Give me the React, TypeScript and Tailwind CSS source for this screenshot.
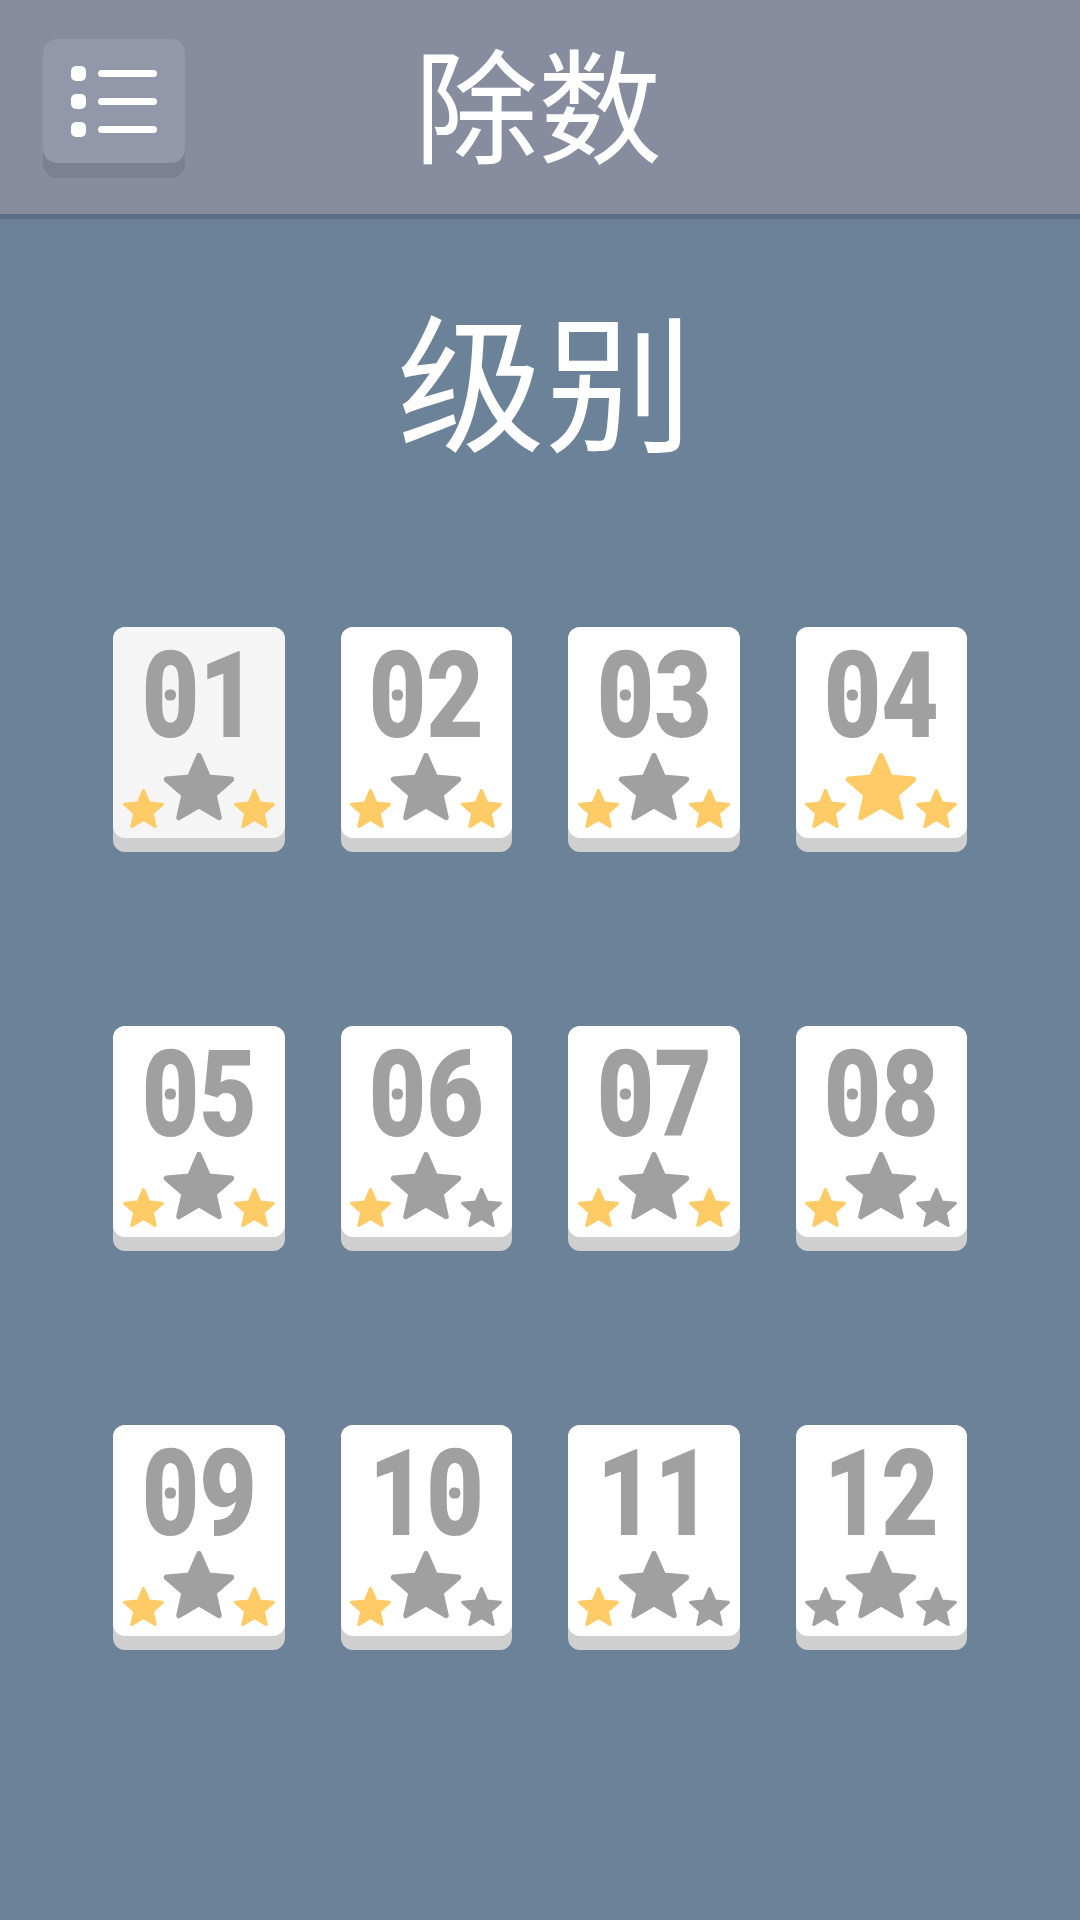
import React from "react";

type Level = {
  label: string;
  stars: [boolean, boolean, boolean];
};

const levels: Level[] = [
  { label: "01", stars: [true, false, true] },
  { label: "02", stars: [true, false, true] },
  { label: "03", stars: [true, false, true] },
  { label: "04", stars: [true, true, true] },
  { label: "05", stars: [true, false, true] },
  { label: "06", stars: [true, false, false] },
  { label: "07", stars: [true, false, true] },
  { label: "08", stars: [true, false, false] },
  { label: "09", stars: [true, false, true] },
  { label: "10", stars: [true, false, false] },
  { label: "11", stars: [true, false, false] },
  { label: "12", stars: [false, false, false] },
];

// five-point star polygon, centre at 0,0, outer radius 50
const starPoints = Array.from({ length: 10 }, (_, i) => {
  const a = ((-90 + i * 36) * Math.PI) / 180;
  const r = i % 2 === 0 ? 50 : 23;
  return `${(Math.cos(a) * r).toFixed(2)},${(Math.sin(a) * r).toFixed(2)}`;
}).join(" ");

function Star({ on, big }: { on: boolean; big?: boolean }) {
  const color = on ? "#fecb66" : "#a0a0a0";
  return (
    <svg
      viewBox="-54 -54 108 101"
      className={big ? "w-[74px] h-[69px] mb-[7px]" : "w-[43px] h-[40px]"}
    >
      <polygon
        points={starPoints}
        fill={color}
        stroke={color}
        strokeWidth={8}
        strokeLinejoin="round"
      />
    </svg>
  );
}

function Digits({ label }: { label: string }) {
  return (
    <div className="scale-x-[0.82] font-['Roboto',sans-serif] font-black text-[121px] leading-none text-[#a0a0a0]">
      {label.split("").map((ch, i) => (
        <span key={i} className="relative inline-block">
          {ch}
          {ch === "0" && (
            <span className="absolute left-1/2 top-[48.6%] w-[14px] h-[11px] -translate-x-1/2 -translate-y-1/2 rounded-full bg-[#a0a0a0]" />
          )}
        </span>
      ))}
    </div>
  );
}

function LevelCard({ level, index }: { level: Level; index: number }) {
  return (
    <div className="rounded-[12px] bg-[#cfcfcf] pb-[14px]">
      <div
        className={
          "h-[211px] rounded-[12px] flex flex-col items-center pt-[9px] " +
          (index === 0 ? "bg-[#f5f5f5]" : "bg-white")
        }
      >
        <Digits label={level.label} />
        <div className="mt-[-4px] flex items-end justify-center gap-0">
          <Star on={level.stars[0]} />
          <div className="-mx-[3px]">
            <Star on={level.stars[1]} big />
          </div>
          <Star on={level.stars[2]} />
        </div>
      </div>
    </div>
  );
}

export default function App() {
  return (
    <div className="w-[1080px] h-[1920px] bg-[#6c8299] flex flex-col font-['Noto_Sans_CJK_SC',sans-serif]">
      <header className="h-[219px] bg-[#878d9f] border-b-[5px] border-[#5c6e84] grid grid-cols-[1fr_auto_1fr] px-[43px]">
        <div className="self-start mt-[39px] w-[142px] rounded-[14px] bg-[#7b8191] pb-[15px]">
          <div className="h-[124px] rounded-[14px] bg-[#9297a9] flex flex-col justify-center gap-[13px] pl-[28px]">
            {[0, 1, 2].map((i) => (
              <div key={i} className="flex items-center gap-[12px]">
                <div className="w-[15px] h-[15px] rounded-[5px] bg-white" />
                <div className="w-[59px] h-[7px] rounded-full bg-white" />
              </div>
            ))}
          </div>
        </div>
        <h1 className="self-center text-white text-[124px] font-normal leading-none -mt-[14px] -ml-[4px]">
          除数
        </h1>
        <div />
      </header>

      <div className="h-[330px] flex items-center justify-center">
        <h2 className="text-white text-[148px] font-normal leading-none -mt-[16px] pl-[10px]">
          级别
        </h2>
      </div>

      <div className="mt-[78px] px-[113px] grid grid-cols-4 gap-x-[56px] gap-y-[174px]">
        {levels.map((lv, i) => (
          <LevelCard key={lv.label} level={lv} index={i} />
        ))}
      </div>
    </div>
  );
}
